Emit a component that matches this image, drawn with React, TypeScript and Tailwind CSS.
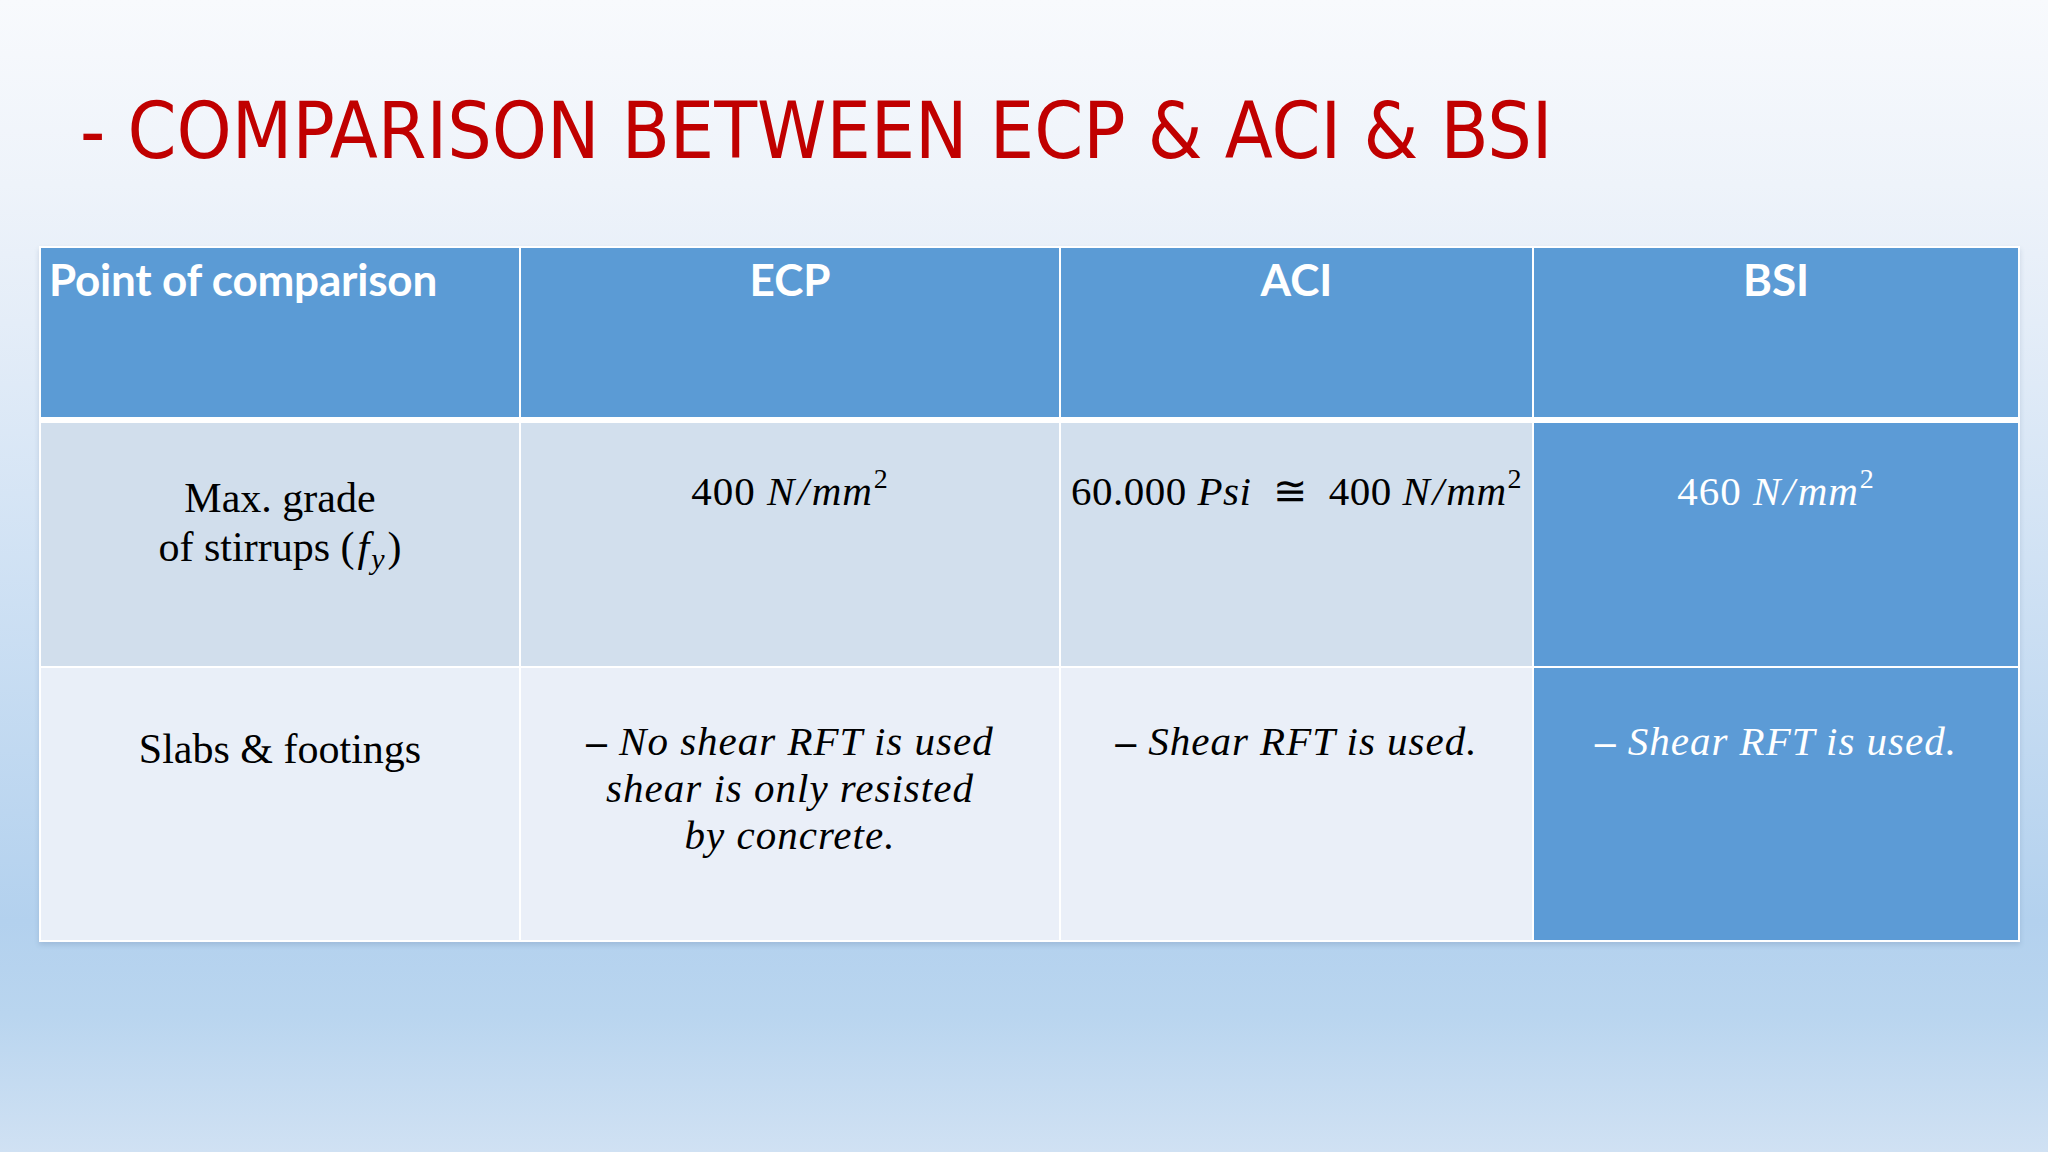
const serif = "font-['Liberation_Serif','Times_New_Roman',serif]"

function Cell({ className, children }: { className: string; children?: React.ReactNode }) {
  return <div className={className}>{children}</div>
}

function Unit() {
  return (
    <>
      <i>N</i>
      <i className="mx-[2px]">/</i>
      <i>mm</i>
      <sup className="ml-[1px] text-[28px] top-[-17px]">2</sup>
    </>
  )
}

export default function App() {
  return (
    <div className="relative h-[1152px] w-[2048px] overflow-hidden bg-[linear-gradient(180deg,#f8fafd_0%,#eef3fa_16%,#e4edf8_28%,#b3d1ee_80%,#b9d5ef_88%,#d0e1f3_100%)]">
      <div className="pl-[80px] pt-[92px]">
        <h1 className="font-['DejaVu_Sans_Condensed','DejaVu_Sans',sans-serif] text-[78px] leading-none font-normal text-[#c00000] font-stretch-condensed whitespace-nowrap">
          - COMPARISON BETWEEN ECP &amp; ACI &amp; BSI
        </h1>
      </div>

      <div className="ml-[39px] mt-[76px] flex w-[1981px] flex-col bg-white p-[2px] shadow-[0_3px_5px_rgba(60,90,130,0.18)]">
        {/* header */}
        <div className="grid grid-cols-[478px_538px_471px_484px] gap-x-[2px] font-['Lato','Liberation_Sans',sans-serif] text-[44px] leading-none font-bold text-white">
          <Cell className="h-[169px] bg-[#5b9bd5] pl-[8px] pt-[9px] tracking-[-0.2px]">Point of comparison</Cell>
          <Cell className="h-[169px] bg-[#5b9bd5] pt-[9px] text-center">ECP</Cell>
          <Cell className="h-[169px] bg-[#5b9bd5] pt-[9px] text-center">ACI</Cell>
          <Cell className="h-[169px] bg-[#5b9bd5] pt-[9px] text-center">BSI</Cell>
        </div>

        {/* row 1 */}
        <div className={`mt-[6px] grid grid-cols-[478px_538px_471px_484px] gap-x-[2px] ${serif} text-black`}>
          <Cell className="h-[243px] bg-[#d1deec] pt-[51px] text-center text-[42px] leading-[49px]">
            <div>Max. grade</div>
            <div>
              of stirrups <span className="mr-[3px]">(</span>
              <i>f</i>
              <sub className="ml-[2px] text-[30px] bottom-[-8px]">
                <i>y</i>
              </sub>
              <span className="ml-[3px]">)</span>
            </div>
          </Cell>
          <Cell className="h-[243px] bg-[#d2dfed] pt-[45px] text-center text-[41px] leading-[46px] tracking-[1px]">
            400 <Unit />
          </Cell>
          <Cell className="h-[243px] bg-[#d2dfed] pt-[45px] text-center text-[41px] leading-[46px] tracking-[0.5px] whitespace-nowrap">
            60.000 <i>Psi</i>&nbsp;&nbsp;≅&nbsp;&nbsp;400 <Unit />
          </Cell>
          <Cell className="h-[243px] bg-[#5c9bd6] pt-[45px] text-center text-[41px] leading-[46px] tracking-[1px] text-white">
            460 <Unit />
          </Cell>
        </div>

        {/* row 2 */}
        <div className={`mt-[2px] grid grid-cols-[478px_538px_471px_484px] gap-x-[2px] ${serif} text-black`}>
          <Cell className="h-[272px] bg-[#e9eff8] pt-[57px] text-center text-[42px] leading-[49px]">
            Slabs &amp; footings
          </Cell>
          <Cell className="h-[272px] bg-[#eaeff8] pt-[50px] text-center text-[41px] leading-[47px] tracking-[1px]">
            <div>
              <span className="font-bold">–</span> <i>No shear RFT is used</i>
            </div>
            <div>
              <i>shear is only resisted</i>
            </div>
            <div>
              <i>by concrete.</i>
            </div>
          </Cell>
          <Cell className="h-[272px] bg-[#eaeff8] pt-[50px] text-center text-[41px] leading-[47px] tracking-[1px]">
            <span className="font-bold">–</span> <i>Shear RFT is used.</i>
          </Cell>
          <Cell className="h-[272px] bg-[#5c9bd6] pt-[50px] text-center text-[41px] leading-[47px] tracking-[1px] text-white">
            <span className="font-bold">–</span> <i>Shear RFT is used.</i>
          </Cell>
        </div>
      </div>
    </div>
  )
}
